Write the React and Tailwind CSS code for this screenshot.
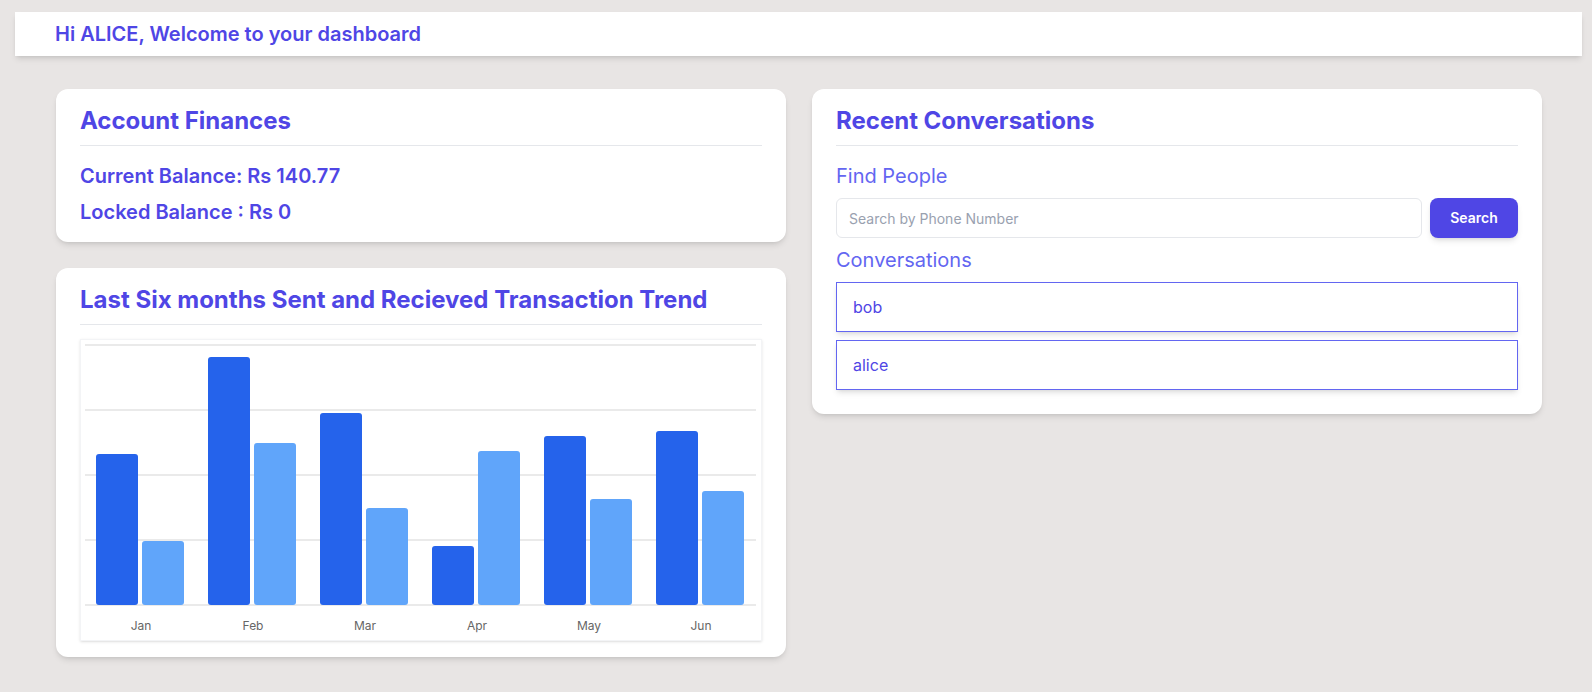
import React from 'react';

const months = [
  { name: 'Jan', sent: 151, recv: 64 },
  { name: 'Feb', sent: 248, recv: 162 },
  { name: 'Mar', sent: 192, recv: 97 },
  { name: 'Apr', sent: 59, recv: 154 },
  { name: 'May', sent: 169, recv: 106 },
  { name: 'Jun', sent: 174, recv: 114 },
];

const conversations = ['bob', 'alice'];

const TrendChart = () => {
  const base = 265;
  const band = 112;
  return (
    <svg width="682" height="300" viewBox="0 0 682 300" className="block">
      {[5, 70, 135, 200, 265].map(y => (
        <line key={y} x1="4" x2="675" y1={y} y2={y} stroke="#e3e3e3" strokeWidth="1.5" />
      ))}
      {months.map((m, i) => {
        const x = 4 + i * band + 11;
        return (
          <g key={m.name}>
            <rect x={x} y={base - m.sent} width="42" height={m.sent} rx="3" fill="#2563eb" />
            <rect x={x + 46} y={base - m.recv} width="42" height={m.recv} rx="3" fill="#60a5fa" />
            <text x={4 + i * band + 56} y="290" textAnchor="middle" fontSize="12" fill="#666" fontFamily="Inter, sans-serif">{m.name}</text>
          </g>
        );
      })}
    </svg>
  );
};

const App = () => {
  return (
    <div className="min-h-screen bg-[#e8e5e4] pt-3 font-['Inter',sans-serif]">
      <div className="ml-[15px] mr-[10px] h-11 bg-white shadow-md flex items-center pl-10">
        <h1 className="text-xl font-semibold text-[#4f46e5]">Hi ALICE, Welcome to your dashboard</h1>
      </div>

      <div className="grid grid-cols-2 gap-[26px] pl-14 pr-[50px] pt-[33px] items-start">
        <div className="flex flex-col gap-[26px]">
          <div className="bg-white rounded-xl shadow-md px-6 pt-4 pb-4">
            <h2 className="text-2xl font-bold text-[#4f46e5] pb-2 border-b border-gray-200">Account Finances</h2>
            <p className="mt-4 text-xl font-semibold text-[#4f46e5]">Current Balance: Rs 140.77</p>
            <p className="mt-2 text-xl font-semibold text-[#4f46e5]">Locked Balance : Rs 0</p>
          </div>

          <div className="bg-white rounded-xl shadow-md px-6 pt-4 pb-4">
            <h2 className="text-2xl font-bold text-[#4f46e5] pb-2 border-b border-gray-200">Last Six months Sent and Recieved Transaction Trend</h2>
            <div className="mt-[14px] bg-white shadow-sm border border-gray-100">
              <TrendChart />
            </div>
          </div>
        </div>

        <div className="bg-white rounded-xl shadow-md px-6 pt-4 pb-6">
          <h2 className="text-2xl font-bold text-[#4f46e5] pb-2 border-b border-gray-200">Recent Conversations</h2>
          <p className="mt-4 text-xl text-[#6366f1]">Find People</p>
          <div className="mt-2 flex gap-2">
            <input
              type="text"
              placeholder="Search by Phone Number"
              className="flex-1 h-10 rounded-md border border-gray-200 px-3 text-sm text-gray-700 placeholder:text-gray-400 outline-none"
            />
            <button className="w-[88px] h-10 rounded-lg bg-[#4f46e5] text-white text-sm font-semibold shadow-md">Search</button>
          </div>
          <p className="mt-2 text-xl text-[#6366f1]">Conversations</p>
          <div className="mt-2 flex flex-col gap-2">
            {conversations.map(c => (
              <div key={c} className="border border-[#6366f1] bg-white shadow-md px-4 py-3 text-base text-[#4f46e5]">{c}</div>
            ))}
          </div>
        </div>
      </div>
    </div>
  );
};

export default App;
